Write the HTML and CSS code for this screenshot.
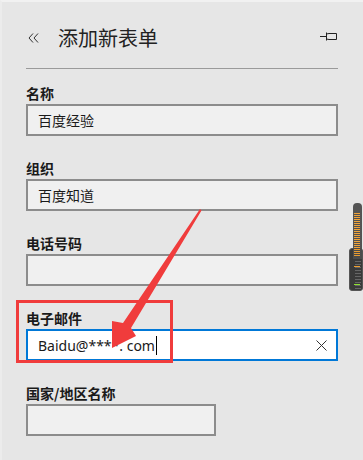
FILE: index.html
```html
<!DOCTYPE html>
<html lang="zh">
<head>
<meta charset="utf-8">
<title>添加新表单</title>
<link rel="stylesheet" href="styles.css">
</head>
<body>
<div class="frame">
  <div class="header">
    <svg class="back" width="11" height="10" viewBox="0 0 11 10"><polyline points="5,0.5 1,5 5,9.5" fill="none" stroke="#333" stroke-width="1"/><polyline points="10,0.5 6,5 10,9.5" fill="none" stroke="#333" stroke-width="1"/></svg>
    <div class="title">添加新表单</div>
    <svg class="pin" width="18" height="9" viewBox="0 0 18 9"><line x1="0" y1="4.5" x2="6" y2="4.5" stroke="#222" stroke-width="1"/><line x1="6.5" y1="0.5" x2="6.5" y2="8.5" stroke="#222" stroke-width="1"/><path d="M6.5 2 L9 1.5 L16.5 1.5 L16.5 7.5 L9 7.5 L6.5 7" fill="none" stroke="#222" stroke-width="1"/></svg>
  </div>
  <div class="fields">
    <div class="field">
      <div class="label">名称</div>
      <div class="input">百度经验</div>
    </div>
    <div class="field">
      <div class="label">组织</div>
      <div class="input">百度知道</div>
    </div>
    <div class="field">
      <div class="label">电话号码</div>
      <div class="input"></div>
    </div>
    <div class="field">
      <div class="label">电子邮件</div>
      <div class="input focus"><span class="latin">Baidu@****. com</span><span class="caret"></span>
        <svg class="clear" width="11" height="11" viewBox="0 0 11 11"><line x1="0.5" y1="0.5" x2="10.5" y2="10.5" stroke="#333" stroke-width="1"/><line x1="10.5" y1="0.5" x2="0.5" y2="10.5" stroke="#333" stroke-width="1"/></svg>
      </div>
    </div>
    <div class="field">
      <div class="label">国家/地区名称</div>
      <div class="input short"></div>
    </div>
  </div>
</div>

<div class="meter">
  <div class="meter-top"></div>
  <div class="meter-box"><div class="tick orange"></div><div class="tick green"></div></div>
</div>

<div class="highlight"></div>
<svg class="arrow" width="363" height="460" viewBox="0 0 363 460">
  <polygon points="200,209 201.5,210.5 131,328 136,336 112,348 112,321 123,323" fill="#f03c3c"/>
</svg>
</body>
</html>
```
FILE: styles.css
```css
html, body {
  margin: 0;
  padding: 0;
}
body {
  width: 363px;
  height: 460px;
  overflow: hidden;
  position: relative;
  background: #e6e6e6;
  font-family: "Noto Sans CJK SC", "Noto Sans", sans-serif;
  color: #1a1a1a;
}
.frame {
  height: 458px;
  border-top: 2px solid #f1f1f1;
  border-left: 2px solid #ececec;
  padding: 0 25px 0 24px;
}
.header {
  display: flex;
  align-items: center;
  height: 28px;
  padding: 22px 0 16px;
  border-bottom: 1px solid #9a9a9a;
}
.back {
  margin-left: 2px;
  flex: none;
}
.title {
  margin-left: 19px;
  font-size: 20px;
  line-height: 28px;
  color: #222;
}
.pin {
  margin-left: auto;
  margin-right: 0;
  margin-top: -4px;
  flex: none;
}
.fields {
  padding-top: 15px;
}
.field {
  display: flex;
  flex-direction: column;
  gap: 2px;
  margin-bottom: 23px;
}
.label {
  font-size: 14px;
  font-weight: 700;
  line-height: 18px;
  color: #1a1a1a;
}
.input {
  height: 32px;
  box-sizing: border-box;
  border: 2px solid #8c8c8c;
  background: #f0f0f0;
  padding: 0 10px;
  display: flex;
  align-items: center;
  font-size: 14px;
  color: #1a1a1a;
}
.input.short {
  width: 190px;
}
.input.focus {
  border-color: #0078d7;
  background: #fff;
}
.latin {
  font-family: "Noto Sans", "Open Sans", sans-serif;
  font-size: 14px;
}
.caret {
  width: 1px;
  height: 19px;
  background: #000;
  margin-left: 1px;
}
.clear {
  margin-left: auto;
  margin-right: -1px;
}
.meter {
  position: absolute;
  left: 349px;
  top: 203px;
  width: 14px;
  height: 88px;
}
.meter-top {
  position: absolute;
  left: 4px;
  top: 0;
  width: 9px;
  height: 56px;
  border-radius: 4px 4px 0 0;
  background: repeating-linear-gradient(to bottom, #f0a030 0 1px, #4a4a4a 1px 2px) 1px 10px / 6px 44px no-repeat, #4d4d4d;
  z-index: 2;
  opacity: 0.95;
}
.meter-box {
  position: absolute;
  left: 0;
  top: 45px;
  width: 14px;
  height: 43px;
  box-sizing: border-box;
  border: 1px solid #555;
  border-radius: 3px;
  background: repeating-linear-gradient(to bottom, #666 0 1px, #3a3a3a 1px 3px) 5px 12px / 6px 28px no-repeat, #3a3a3a;
}
.tick {
  position: absolute;
  left: 4px;
  width: 6px;
  height: 1px;
}
.tick.orange {
  top: 17px;
  background: #f0a030;
}
.tick.green {
  top: 35px;
  background: #8ee030;
}
.highlight {
  position: absolute;
  left: 16px;
  top: 300px;
  width: 151px;
  height: 57px;
  border: 3px solid #f03c3c;
}
.arrow {
  position: absolute;
  left: 0;
  top: 0;
  pointer-events: none;
}
```
